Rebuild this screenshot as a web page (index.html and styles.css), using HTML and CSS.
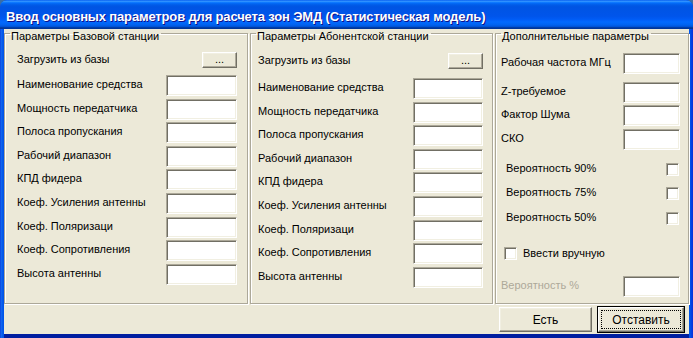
FILE: index.html
```html
<!DOCTYPE html>
<html lang="ru">
<head>
    <meta charset="UTF-8">
    <meta name="viewport" content="width=device-width, initial-scale=1.0">
    <title>Ввод основных параметров</title>
    <link rel="stylesheet" href="styles.css">
</head>
<body>
    <div class="window">
        <div class="titlebar">
            <span class="title">Ввод основных параметров для расчета зон ЭМД (Статистическая модель)</span>
        </div>
        <div class="client">
            <div class="panels">
                <fieldset class="group group-base">
                    <legend>Параметры Базовой станции</legend>
                    <div class="row row-load"><span>Загрузить из базы</span><button class="btn btn-dots">...</button></div>
                    <div class="row"><label>Наименование средства</label><input type="text"></div>
                    <div class="row"><label>Мощность передатчика</label><input type="text"></div>
                    <div class="row"><label>Полоса пропускания</label><input type="text"></div>
                    <div class="row"><label>Рабочий диапазон</label><input type="text"></div>
                    <div class="row"><label>КПД фидера</label><input type="text"></div>
                    <div class="row"><label>Коеф. Усиления антенны</label><input type="text"></div>
                    <div class="row"><label>Коеф. Поляризаци</label><input type="text"></div>
                    <div class="row"><label>Коеф. Сопротивления</label><input type="text"></div>
                    <div class="row"><label>Высота антенны</label><input type="text"></div>
                </fieldset>

                <fieldset class="group group-sub">
                    <legend>Параметры Абонентской станции</legend>
                    <div class="row row-load"><span>Загрузить из базы</span><button class="btn btn-dots">...</button></div>
                    <div class="row"><label>Наименование средства</label><input type="text"></div>
                    <div class="row"><label>Мощность передатчика</label><input type="text"></div>
                    <div class="row"><label>Полоса пропускания</label><input type="text"></div>
                    <div class="row"><label>Рабочий диапазон</label><input type="text"></div>
                    <div class="row"><label>КПД фидера</label><input type="text"></div>
                    <div class="row"><label>Коеф. Усиления антенны</label><input type="text"></div>
                    <div class="row"><label>Коеф. Поляризаци</label><input type="text"></div>
                    <div class="row"><label>Коеф. Сопротивления</label><input type="text"></div>
                    <div class="row"><label>Высота антенны</label><input type="text"></div>
                </fieldset>

                <fieldset class="group group-extra">
                    <legend>Дополнительные параметры</legend>
                    <div class="row row-freq"><label>Рабочая частота МГц</label><input type="text"></div>
                    <div class="row row-z"><label>Z-требуемое</label><input type="text"></div>
                    <div class="row row-noise"><label>Фактор Шума</label><input type="text"></div>
                    <div class="row row-sko"><label>СКО</label><input type="text"></div>
                    <div class="check-row check-90"><label>Вероятность 90%</label><span class="checkbox"></span></div>
                    <div class="check-row check-75"><label>Вероятность 75%</label><span class="checkbox"></span></div>
                    <div class="check-row check-50"><label>Вероятность 50%</label><span class="checkbox"></span></div>
                    <div class="manual"><span class="checkbox"></span><label>Ввести вручную</label></div>
                    <div class="row row-prob disabled"><label>Вероятность %</label><input type="text"></div>
                </fieldset>
            </div>

            <div class="actions">
                <button class="btn btn-ok">Есть</button>
                <button class="btn btn-cancel"><span class="focus">Отставить</span></button>
            </div>
        </div>
    </div>
</body>
</html>
```

FILE: styles.css
```css
body {
    margin: 0;
    background-color: #3a6ea5;
    font-family: "Liberation Sans", Arial, sans-serif;
    font-size: 11px;
    color: #000;
}
.window {
    width: 693px;
    height: 338px;
    display: flex;
    flex-direction: column;
    border-radius: 7px 7px 0 0;
    background: linear-gradient(to right, #0831d9 0, #166aee 1px, #0055ea 3px, #0055ea 690px, #0831d9 693px);
    overflow: hidden;
}
.titlebar {
    height: 29px;
    flex: none;
    display: flex;
    align-items: center;
    padding-left: 6px;
    border-radius: 7px 7px 0 0;
    background: linear-gradient(#0058ee 0%, #3593ff 4%, #288eff 6%, #127dff 8%, #036ffc 10%, #0262ee 14%, #0057e5 20%, #0054e3 24%, #0055eb 56%, #005bf5 66%, #026afe 76%, #0062ef 86%, #0052d6 92%, #0040ab 94%, #003092 100%);
}
.title {
    color: #fff;
    font-weight: bold;
    font-size: 13px;
    letter-spacing: -0.15px;
    text-shadow: 1px 1px #0f1089;
    margin-top: 3px;
}
.client {
    flex: 1;
    margin: 0 4px 4px 4px;
    background-color: #ece9d8;
    display: flex;
    flex-direction: column;
    box-shadow: 0 4px 0 #001ea0;
}
.panels {
    display: grid;
    grid-template-columns: 245px 245px 1fr;
    height: 276px;
}
.group {
    margin: 0;
    padding: 0;
    min-width: 0;
    border: 1px solid #aca899;
    box-shadow: inset 1px 1px 0 #fff, 1px 1px 0 #fff;
}
.group legend {
    box-sizing: content-box;
    height: 7px;
    padding: 1px 2px 0 1px;
    margin-left: 5px;
    line-height: 12px;
}
.group-base {
    margin: 0 1px 1px 0;
}
.group-sub {
    margin: 0 1px 1px 1px;
}
.group-extra {
    margin: 0 0 1px 1px;
}
.row {
    display: flex;
    align-items: center;
    justify-content: space-between;
    height: 21px;
    margin-bottom: 2.6px;
}
.row label, .row span, .check-row label {
    padding-bottom: 3px;
}
.group-base .row {
    padding: 0 10px 0 12px;
}
.group-sub .row {
    padding: 0 9px 0 7px;
}
.group-base .row-load {
    height: 16px;
    margin-top: 15px;
    margin-bottom: 7px;
}
.group-sub .row-load {
    height: 16px;
    margin-top: 16px;
    margin-bottom: 9px;
}
input[type="text"] {
    box-sizing: border-box;
    width: 71px;
    height: 21px;
    margin: 0;
    padding: 0;
    background: #fff;
    border: 1px solid;
    border-color: #aca899 #fff #fff #aca899;
    box-shadow: inset 1px 1px 0 #716f64, inset -1px -1px 0 #f1efe2;
}
.group-sub input[type="text"] {
    width: 70px;
}
.btn {
    box-sizing: border-box;
    font-family: "Liberation Sans", Arial, sans-serif;
    font-size: 11px;
    color: #000;
    background: #ece9d8;
    border: 1px solid;
    border-color: #fff #716f64 #716f64 #fff;
    box-shadow: inset -1px -1px 0 #aca899, inset 1px 1px 0 #f1efe2;
    padding: 0;
    margin: 0;
}
.btn-dots {
    width: 35px;
    height: 16px;
    line-height: 10px;
    padding-bottom: 3px;
}
/* extra column */
.group-extra .row {
    padding: 0 8px 0 5px;
    margin-bottom: 0;
}
.group-extra input[type="text"] {
    width: 57px;
}
.group-extra .row-freq { margin-top: 16px; }
.group-extra .row-z { margin-top: 8px; }
.group-extra .row-noise { margin-top: 2px; }
.group-extra .row-sko { margin-top: 3px; }
.check-row {
    display: flex;
    align-items: center;
    justify-content: space-between;
    height: 13px;
    padding: 0 9px 0 10px;
}
.check-90 { margin-top: 13px; }
.check-75 { margin-top: 11px; }
.check-50 { margin-top: 12px; }
.checkbox {
    box-sizing: border-box;
    display: block;
    width: 13px;
    height: 13px;
    background: #fff;
    border: 1px solid;
    border-color: #aca899 #fff #fff #aca899;
    box-shadow: inset 1px 1px 0 #716f64, inset -1px -1px 0 #f1efe2;
}
.manual {
    display: flex;
    align-items: center;
    gap: 6px;
    height: 13px;
    margin-top: 22px;
    padding-left: 8px;
}
.manual label {
    padding-bottom: 2px;
}
.group-extra .row-prob { margin-top: 16px; }
.disabled label {
    color: #aca899;
}
.actions {
    display: flex;
    justify-content: flex-end;
    align-items: center;
    gap: 5px;
    flex: 1;
    padding-right: 4px;
}
.btn-ok {
    width: 93px;
    height: 25px;
    font-size: 12px;
}
.btn-cancel {
    width: 88px;
    height: 27px;
    font-size: 12px;
    outline: 1px solid #000;
    outline-offset: -1px;
    border-width: 2px;
    display: flex;
    align-items: center;
    justify-content: center;
    padding: 2px;
}
.focus {
    flex: 1;
    align-self: stretch;
    display: flex;
    align-items: center;
    justify-content: center;
    border: 1px dotted #000;
}
```
